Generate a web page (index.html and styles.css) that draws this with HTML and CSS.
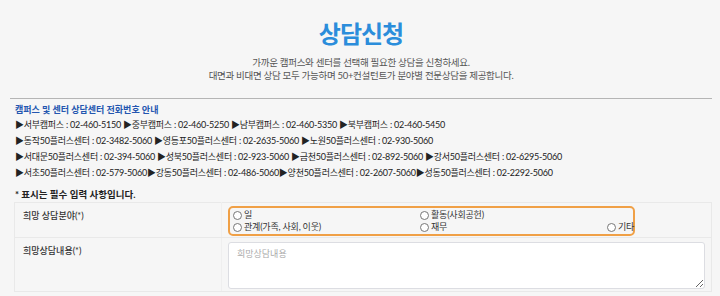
FILE: index.html
```html
<!DOCTYPE html>
<html lang="ko">
<head>
    <meta charset="UTF-8">
    <meta name="viewport" content="width=device-width, initial-scale=1.0">
    <title>상담신청</title>
    <link rel="stylesheet" href="styles.css">
</head>
<body>
    <div class="page">
        <div class="page-header">
            <h1 class="page-title">상담신청</h1>
            <p class="page-lead">
                <span>가까운 캠퍼스와 센터를 선택해 필요한 상담을 신청하세요.</span>
                <span>대면과 비대면 상담 모두 가능하며 50+컨설턴트가 분야별 전문상담을 제공합니다.</span>
            </p>
        </div>

        <div class="contact-info">
            <h2 class="contact-title">캠퍼스 및 센터 상담센터 전화번호 안내</h2>
            <p>▶서부캠퍼스 : 02-460-5150 ▶중부캠퍼스 : 02-460-5250 ▶남부캠퍼스 : 02-460-5350 ▶북부캠퍼스 : 02-460-5450</p>
            <p>▶동작50플러스센터 : 02-3482-5060 ▶영등포50플러스센터 : 02-2635-5060 ▶노원50플러스센터 : 02-930-5060</p>
            <p>▶서대문50플러스센터 : 02-394-5060 ▶성북50플러스센터 : 02-923-5060 ▶금천50플러스센터 : 02-892-5060 ▶강서50플러스센터 : 02-6295-5060</p>
            <p>▶서초50플러스센터 : 02-579-5060▶강동50플러스센터 : 02-486-5060▶양천50플러스센터 : 02-2607-5060▶성동50플러스센터 : 02-2292-5060</p>
        </div>

        <p class="required-note">* 표시는 필수 입력 사항입니다.</p>

        <table class="form-table">
            <tr>
                <th>희망 상담분야(*)</th>
                <td>
                    <div class="radio-group">
                        <label class="radio"><input type="radio" name="field">일</label>
                        <label class="radio"><input type="radio" name="field">활동(사회공헌)</label>
                        <span></span>
                        <label class="radio"><input type="radio" name="field">관계(가족, 사회, 이웃)</label>
                        <label class="radio"><input type="radio" name="field">재무</label>
                        <label class="radio"><input type="radio" name="field">기타</label>
                    </div>
                </td>
            </tr>
            <tr>
                <th>희망상담내용(*)</th>
                <td><textarea class="content-input" placeholder="희망상담내용"></textarea></td>
            </tr>
        </table>
    </div>
</body>
</html>
```

FILE: styles.css
```css
body {
    margin: 0;
    background-color: #f6f6f6;
    font-family: Lato, "Noto Sans CJK KR", sans-serif;
    color: #222;
}

.page {
    padding: 0 8px 0 10px;
}

.page-header {
    text-align: center;
    border-bottom: 1px solid #b5b5b5;
    padding-top: 17px;
    padding-bottom: 16px;
}

.page-title {
    margin: 0;
    font-size: 24px;
    font-weight: bold;
    color: #2b8ddb;
    letter-spacing: -1px;
    line-height: 34px;
}

.page-lead {
    margin: 5px 0 0;
    font-size: 9.5px;
    color: #555;
    letter-spacing: -0.3px;
}

.page-lead span {
    display: block;
    height: 13px;
    line-height: 13px;
}

.contact-info {
    padding: 4px 5px 0;
}

.contact-title {
    margin: 0;
    font-size: 9px;
    font-weight: bold;
    color: #2456b0;
    line-height: 14px;
}

.contact-info p {
    margin: 0;
    font-size: 9px;
    line-height: 16px;
    letter-spacing: -0.25px;
    color: #222;
}

.required-note {
    margin: 7px 0 0 5px;
    font-size: 9.5px;
    font-weight: bold;
    line-height: 14px;
}

.form-table {
    width: 698px;
    margin-left: 4px;
    border-collapse: collapse;
    border: 1px solid #e9e9e9;
}

.form-table th {
    width: 192px;
    padding: 6px 8px;
    text-align: left;
    vertical-align: top;
    font-size: 9px;
    font-weight: 500;
    color: #333;
    border-bottom: 1px solid #e9e9e9;
    border-right: 1px solid #efefef;
}

.form-table td {
    padding: 3px 6px 1px;
    border-bottom: 1px solid #e9e9e9;
}

.radio-group {
    display: grid;
    grid-template-columns: 187px 187px auto;
    width: 399px;
    padding: 1px 1px 1px 3px;
    border: 2px solid #f0a046;
    border-radius: 5px;
    font-size: 9px;
    letter-spacing: -0.2px;
    line-height: 12px;
    color: #333;
}

.radio {
    display: flex;
    align-items: center;
    white-space: nowrap;
}

.radio input {
    width: 9px;
    height: 9px;
    margin: 0 2px 0 0;
}

.content-input {
    display: block;
    box-sizing: border-box;
    width: 477px;
    height: 47px;
    margin: 1px 0 1px;
    padding: 4px 8px;
    border: 1px solid #dcdde2;
    border-radius: 3px;
    background-color: #fff;
    font-family: Lato, "Noto Sans CJK KR", sans-serif;
    font-size: 9px;
}

.content-input::placeholder {
    color: #aaa;
}
```
